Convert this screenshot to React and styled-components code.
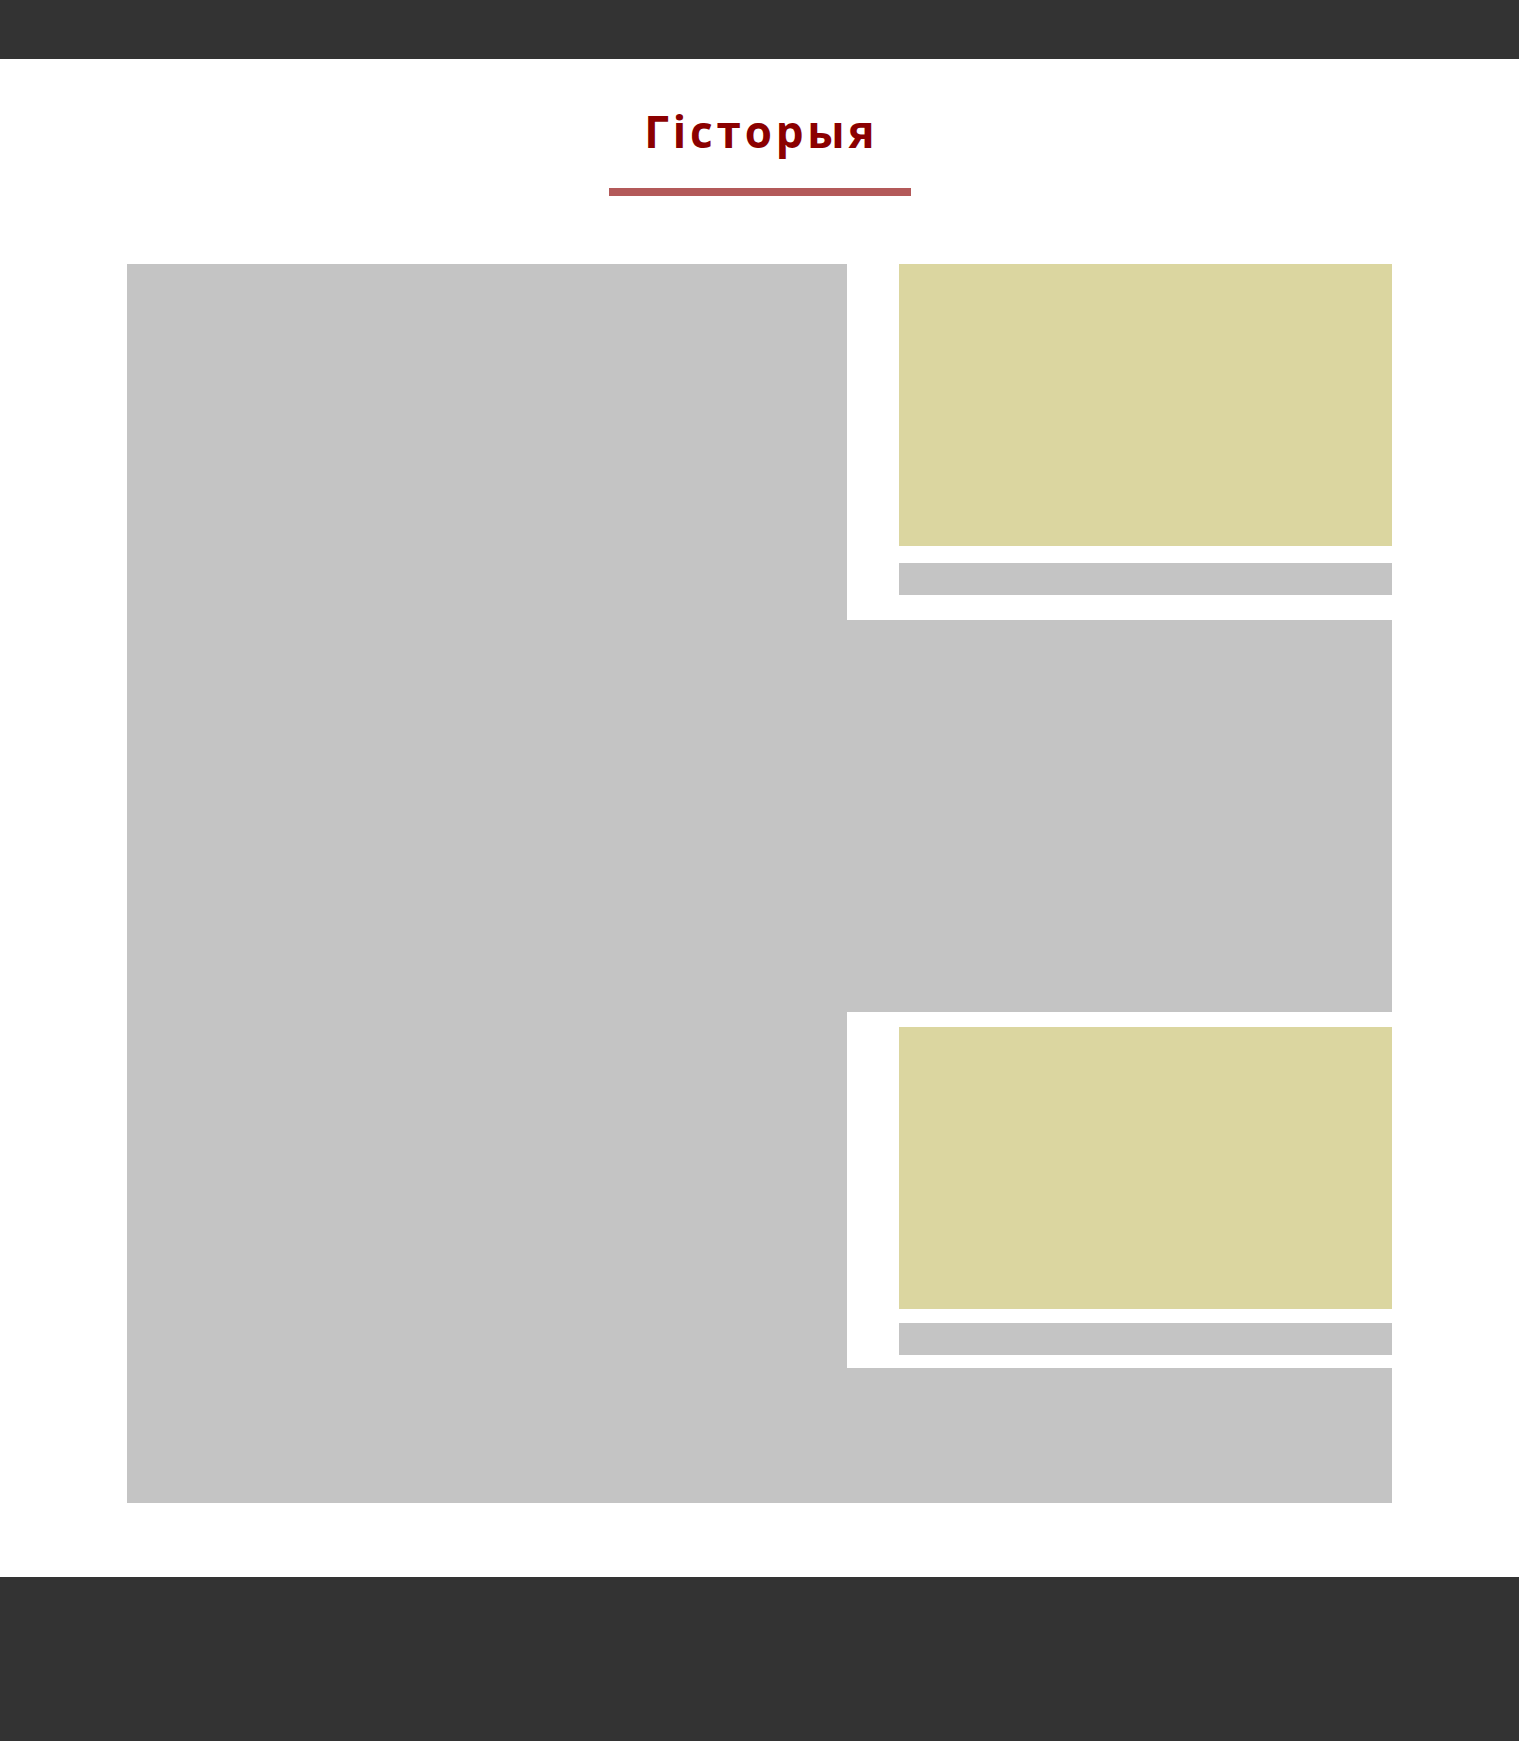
import React from "react";
import styled, { createGlobalStyle } from "styled-components";

const Global = createGlobalStyle`
  html, body { margin: 0; padding: 0; background: #ffffff; }
  body { font-family: "Open Sans", "Noto Sans", sans-serif; }
  * { box-sizing: border-box; }
`;

const Page = styled.div`
  display: flex;
  flex-direction: column;
  min-height: 1741px;
`;

const TopBar = styled.header`
  height: 59px;
  background: #333333;
`;

const Section = styled.main`
  display: flex;
  flex-direction: column;
  align-items: center;
  padding: 50px 0 74px;
`;

const Title = styled.h1`
  margin: 0;
  font-family: "Open Sans", "Noto Sans", sans-serif;
  font-weight: 700;
  font-size: 44px;
  line-height: 44px;
  letter-spacing: 3.8px;
  padding-left: 3.8px;
  color: #8b0000;
`;

const Underline = styled.div`
  width: 302px;
  height: 8px;
  margin-top: 35px;
  background: #b35959;
`;

const Grid = styled.div`
  display: grid;
  grid-template-columns: 720px 545px;
  margin-top: 68px;
  width: 1265px;
`;

const MainPhoto = styled.div`
  height: 1239px;
  background: #c4c4c4;
`;

const Side = styled.div`
  display: flex;
  flex-direction: column;
`;

const Card = styled.div`
  display: flex;
  flex-direction: column;
  height: 356px;
  padding: ${(p) => p.$top}px 0 0 52px;
  gap: ${(p) => p.$gap}px;
  background: #ffffff;
`;

const CardImage = styled.div`
  height: 282px;
  background: #dbd6a0;
`;

const Caption = styled.div`
  height: 32px;
  background: #c4c4c4;
`;

const Filler = styled.div`
  height: ${(p) => (p.$h ? `${p.$h}px` : "auto")};
  flex: ${(p) => (p.$h ? "none" : "1")};
  background: #c4c4c4;
`;

const Footer = styled.footer`
  height: 164px;
  background: #333333;
`;

export default function App() {
  return (
    <>
      <Global />
      <Page>
        <TopBar />
        <Section>
          <Title>Гісторыя</Title>
          <Underline />
          <Grid>
            <MainPhoto />
            <Side>
              <Card $top={0} $gap={17}>
                <CardImage />
                <Caption />
              </Card>
              <Filler $h={392} />
              <Card $top={15} $gap={14}>
                <CardImage />
                <Caption />
              </Card>
              <Filler />
            </Side>
          </Grid>
        </Section>
        <Footer />
      </Page>
    </>
  );
}
